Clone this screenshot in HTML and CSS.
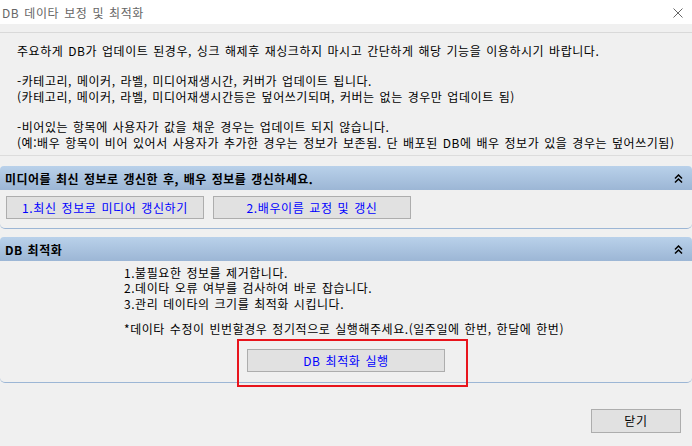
FILE: index.html
```html
<!DOCTYPE html>
<html lang="ko">
<head>
    <meta charset="UTF-8">
    <title>DB 데이타 보정 및 최적화</title>
    <link rel="stylesheet" href="styles.css">
</head>
<body>
    <div class="window">
        <div class="titlebar">
            <span class="title">DB 데이타 보정 및 최적화</span>
            <svg class="close-x" width="10" height="10" viewBox="0 0 10 10">
                <path d="M0.5 0.5 L9.5 9.5 M9.5 0.5 L0.5 9.5" stroke="#666" stroke-width="1" fill="none"/>
            </svg>
        </div>
        <div class="strip"></div>

        <div class="notice">
            <p>주요하게 DB가 업데이트 된경우, 싱크 해제후 재싱크하지 마시고 간단하게 해당 기능을 이용하시기 바랍니다.</p>
            <p>-카테고리, 메이커, 라벨, 미디어재생시간, 커버가 업데이트 됩니다.<br>(카테고리, 메이커, 라벨, 미디어재생시간등은 덮어쓰기되며, 커버는 없는 경우만 업데이트 됨)</p>
            <p>-비어있는 항목에 사용자가 값을 채운 경우는 업데이트 되지 않습니다.<br>(예:배우 항목이 비어 있어서 사용자가 추가한 경우는 정보가 보존됨. 단 배포된 DB에 배우 정보가 있을 경우는 덮어쓰기됨)</p>
        </div>

        <div class="panel">
            <div class="panel-head">
                <span>미디어를 최신 정보로 갱신한 후, 배우 정보를 갱신하세요.</span>
                <svg class="chevron" width="9" height="9" viewBox="0 0 9 9">
                    <path d="M1 4.5 L4.5 1 L8 4.5 M1 8.5 L4.5 5 L8 8.5" stroke="#000" stroke-width="1.5" fill="none"/>
                </svg>
            </div>
            <div class="panel-body update-body">
                <button class="btn link-btn wide">1.최신 정보로 미디어 갱신하기</button>
                <button class="btn link-btn wide">2.배우이름 교정 및 갱신</button>
            </div>
        </div>

        <div class="panel">
            <div class="panel-head">
                <span>DB 최적화</span>
                <svg class="chevron" width="9" height="9" viewBox="0 0 9 9">
                    <path d="M1 4.5 L4.5 1 L8 4.5 M1 8.5 L4.5 5 L8 8.5" stroke="#000" stroke-width="1.5" fill="none"/>
                </svg>
            </div>
            <div class="panel-body optimize-body">
                <p>1.불필요한 정보를 제거합니다.<br>2.데이타 오류 여부를 검사하여 바로 잡습니다.<br>3.관리 데이타의 크기를 최적화 시킵니다.</p>
                <p>*데이타 수정이 빈번할경우 정기적으로 실행해주세요.(일주일에 한번, 한달에 한번)</p>
                <div class="run-row">
                    <button class="btn link-btn wide">DB 최적화 실행</button>
                    <div class="highlight"></div>
                </div>
            </div>
        </div>

        <div class="footer">
            <button class="btn close-btn">닫기</button>
        </div>
    </div>
</body>
</html>
```

FILE: styles.css
```css
body {
    margin: 0;
    font-family: 'Noto Sans CJK KR', 'Noto Sans', sans-serif;
    font-size: 12px;
    letter-spacing: 0.55px;
    word-spacing: 1px;
    color: #000;
}
.window {
    width: 692px;
    height: 446px;
    background: #f0f0f0;
    overflow: hidden;
}
.titlebar {
    height: 24px;
    background: white;
    display: flex;
    align-items: center;
    justify-content: space-between;
    padding: 0 9px 0 2px;
}
.title {
    color: #666;
    font-size: 12px;
    letter-spacing: 0.6px;
}
.close-x {
    margin-top: 2px;
}
.strip {
    height: 8px;
    border-bottom: 1px solid #d9d9d9;
}
.notice {
    padding: 10px 17px 3.5px;
    line-height: 16.5px;
    white-space: nowrap;
    border-bottom: 1px solid #dcdcdc;
}
.notice p {
    margin: 0 0 13px;
}
.notice p:last-child {
    margin-bottom: 0;
}
.panel {
    margin-top: 10px;
}
.panel + .panel {
    margin-top: 8px;
}
.panel-head {
    height: 24px;
    background: linear-gradient(#b9d1ea, #9cb6d5);
    border-radius: 4px 4px 0 0;
    display: flex;
    align-items: center;
    justify-content: space-between;
    padding: 0 9px 0 5px;
    font-weight: bold;
    letter-spacing: 0.5px;
}
.panel-body {
    border-bottom: 1px solid #9cb6d5;
    border-radius: 0 0 5px 5px;
}
.update-body {
    display: flex;
    gap: 9px;
    padding: 6px 6px 9px;
}
.btn {
    font-family: inherit;
    font-size: 12px;
    letter-spacing: 0.6px;
    word-spacing: 1px;
    background: #e1e1e1;
    border: 1px solid #adadad;
    padding: 0;
    height: 23px;
}
.link-btn {
    color: #0000ff;
}
.wide {
    width: 198px;
}
.optimize-body {
    padding: 4px 0 10px 124px;
    line-height: 15.3px;
    white-space: nowrap;
}
.optimize-body p {
    margin: 0 0 10.5px;
}
.run-row {
    position: relative;
    margin-left: 123px;
    margin-top: 12px;
    height: 23px;
}
.highlight {
    position: absolute;
    left: -10px;
    top: -10px;
    width: 227px;
    height: 44px;
    border: 2px solid #e8141c;
}
.footer {
    display: flex;
    justify-content: flex-end;
    padding: 26px 11px 0 0;
}
.close-btn {
    width: 90px;
    height: 24px;
}
```
